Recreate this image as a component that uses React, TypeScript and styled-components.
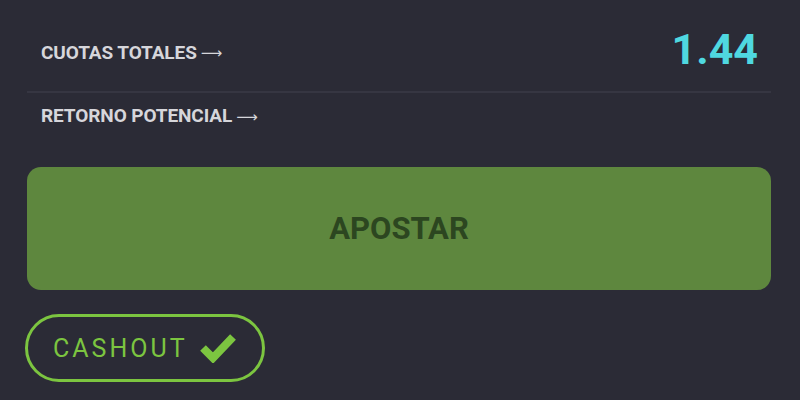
import React from "react";
import styled, { createGlobalStyle } from "styled-components";

const GlobalStyle = createGlobalStyle`
  html, body {
    margin: 0;
    padding: 0;
    background: #2b2b36;
    font-family: Roboto, "Liberation Sans", sans-serif;
  }
`;

const Panel = styled.div`
  width: 800px;
  height: 400px;
  box-sizing: border-box;
  padding: 20px 29px 0 27px;
  display: flex;
  flex-direction: column;
`;

const Row = styled.div<{ $h: number; $divider?: boolean; $lift?: number }>`
  height: ${(p) => p.$h}px;
  box-sizing: border-box;
  display: flex;
  align-items: center;
  justify-content: space-between;
  padding: 0 13px ${(p) => p.$lift ?? 0}px 14px;
  border-bottom: ${(p) => (p.$divider ? "2px solid #363642" : "none")};
`;

const Label = styled.span`
  color: #d6d6db;
  font-size: 19px;
  font-weight: 700;
  letter-spacing: -0.1px;
  display: flex;
  align-items: center;
  gap: 4px;
`;

const Arrow = styled.span`
  font-family: "DejaVu Sans", sans-serif;
  font-weight: 400;
  font-size: 15px;
  margin-top: 2px;
`;

const Odds = styled.span`
  color: #4fd8e0;
  font-size: 43px;
  font-weight: 700;
  line-height: 1;
  margin-bottom: 5px;
`;

const BetButton = styled.button`
  margin-top: 27px;
  height: 123px;
  border: none;
  border-radius: 14px;
  background: #5e873e;
  color: #2c4620;
  font-family: Roboto, "Liberation Sans", sans-serif;
  font-size: 31px;
  font-weight: 700;
  cursor: pointer;
`;

const CashoutPill = styled.div`
  margin-top: 24px;
  margin-left: -2px;
  width: 240px;
  height: 68px;
  box-sizing: border-box;
  border: 3px solid #7cc540;
  border-radius: 34px;
  display: flex;
  align-items: center;
  gap: 11px;
  padding-left: 25px;
  color: #7cc540;
  font-size: 25px;
  letter-spacing: 3px;
`;

const App = () => (
  <>
    <GlobalStyle />
    <Panel>
      <Row $h={73} $divider $lift={7}>
        <Label>
          CUOTAS TOTALES <Arrow>⟶</Arrow>
        </Label>
        <Odds>1.44</Odds>
      </Row>
      <Row $h={47} $lift={2}>
        <Label>
          RETORNO POTENCIAL <Arrow>⟶</Arrow>
        </Label>
      </Row>
      <BetButton>APOSTAR</BetButton>
      <CashoutPill>
        CASHOUT
        <svg width="38" height="30" viewBox="0 0 38 30">
          <path d="M4 15 L14 25 L34 4" fill="none" stroke="#7cc540" strokeWidth="8" />
        </svg>
      </CashoutPill>
    </Panel>
  </>
);

export default App;
